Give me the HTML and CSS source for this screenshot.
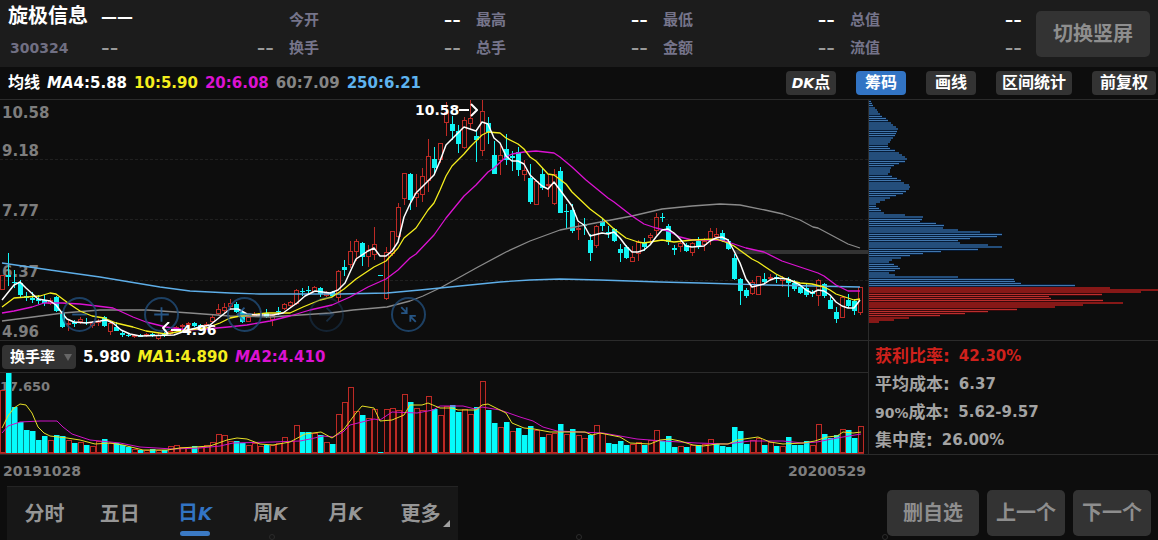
FILE: index.html
```html
<!DOCTYPE html>
<html lang="zh-CN">
<head>
<meta charset="utf-8">
<meta name="viewport" content="width=device-width, initial-scale=1">
<title>旋极信息 300324</title>
<link rel="stylesheet" href="styles.css">
</head>
<body>
<header class="quote">
  <div class="identity">
    <div class="identity-row"><h1 class="stock-name">旋极信息</h1><span class="last-price">——</span></div>
    <div class="identity-row"><span class="stock-code">300324</span><span class="dash change">--</span><span class="dash change-rate">--</span></div>
  </div>
  <dl class="quote-cell"><dt>今开</dt><dd class="dash lit">--</dd><dt>换手</dt><dd class="dash">--</dd></dl>
  <dl class="quote-cell"><dt>最高</dt><dd class="dash lit">--</dd><dt>总手</dt><dd class="dash">--</dd></dl>
  <dl class="quote-cell"><dt>最低</dt><dd class="dash lit">--</dd><dt>金额</dt><dd class="dash">--</dd></dl>
  <dl class="quote-cell"><dt>总值</dt><dd class="dash lit">--</dd><dt>流值</dt><dd class="dash">--</dd></dl>
  <button class="btn rotate" type="button">切换竖屏</button>
</header>

<section class="toolbar">
  <div class="legend">
    <span class="legend-title">均线</span>
    <span><i>MA</i>4:5.88</span>
    <span class="yellow">10:5.90</span>
    <span class="magenta">20:6.08</span>
    <span class="gray">60:7.09</span>
    <span class="blue">250:6.21</span>
  </div>
  <div class="tools">
    <button class="chip-btn snug" type="button"><i>DK</i>点</button>
    <button class="chip-btn active" type="button">筹码</button>
    <button class="chip-btn" type="button">画线</button>
    <button class="chip-btn wide" type="button">区间统计</button>
    <button class="chip-btn" type="button">前复权</button>
  </div>
</section>

<main class="board">
  <div class="charts">
    <div class="price-chart">
      <span class="axis p1">10.58</span>
      <span class="axis p2">9.18</span>
      <span class="axis p3">7.77</span>
      <span class="axis p4">6.37</span>
      <span class="axis p5">4.96</span>
      <svg id="price" class="plot" viewBox="0 100 868 240" preserveAspectRatio="none" role="img" aria-label="日K线"></svg>
      <div class="controls">
        <button type="button" aria-label="缩小"><svg viewBox="0 0 34 34"><path d="M9 17H25"/></svg></button>
        <button type="button" aria-label="放大"><svg viewBox="0 0 34 34"><path d="M9 17H25M17 9V25"/></svg></button>
        <button type="button" aria-label="左移"><svg viewBox="0 0 34 34"><path d="M25 17H10M17 9.500L9.500 17L17 24.500"/></svg></button>
        <button type="button" aria-label="右移" class="dim"><svg viewBox="0 0 34 34"><path d="M9 17H24M17 9.500L24.500 17L17 24.500"/></svg></button>
        <button type="button" aria-label="收起"><svg viewBox="0 0 34 34"><path d="M9 9L15 15M15 9V15.500H9M25 25L19 19M19 25V18.500H25"/></svg></button>
      </div>
      <div class="mark high"><span>10.58</span><svg width="19" height="16" viewBox="0 0 19 16"><path d="M0 8H10M12 2L18 8L12 14"/></svg></div>
      <div class="mark low"><svg width="20" height="16" viewBox="0 0 20 16"><path d="M7 0L1 6L6 12M9 8H19"/></svg><span>4.96</span></div>
    </div>

    <div class="indicator">
      <label class="picker"><select aria-label="指标"><option>换手率</option></select></label>
      <span>5.980</span>
      <span class="yellow"><i>MA</i>1:4.890</span>
      <span class="magenta"><i>MA</i>2:4.410</span>
    </div>

    <div class="volume-chart">
      <span class="axis v1">17.650</span>
      <svg id="volume" class="plot" viewBox="0 373 868 81" preserveAspectRatio="none" role="img" aria-label="换手率"></svg>
    </div>
  </div>

  <aside class="holding">
    <div class="distribution">
      <svg id="chips" class="plot" viewBox="869 100 289 240" preserveAspectRatio="none" role="img" aria-label="筹码分布"></svg>
    </div>
    <dl class="stats">
      <div class="red"><dt>获利比率:</dt><dd>42.30%</dd></div>
      <div><dt>平均成本:</dt><dd>6.37</dd></div>
      <div><dt><b>90%</b>成本:</dt><dd>5.62-9.57</dd></div>
      <div><dt>集中度:</dt><dd>26.00%</dd></div>
    </dl>
  </aside>
</main>

<div class="dates"><div class="date-range"><time>20191028</time><time>20200529</time></div></div>

<footer class="bottom">
  <nav class="tabs">
    <button type="button">分时</button>
    <button type="button">五日</button>
    <button type="button" class="current">日<i>K</i></button>
    <button type="button">周<i>K</i></button>
    <button type="button">月<i>K</i></button>
    <button type="button" class="more">更多</button>
  </nav>
  <div class="actions">
    <button class="btn large" type="button">删自选</button>
    <button class="btn" type="button">上一个</button>
    <button class="btn" type="button">下一个</button>
  </div>
  <div class="rivets"><span></span><span></span><span></span></div>
</footer>
<script src="charts.js"></script>
</body>
</html>
```
FILE: styles.css
```css
* { box-sizing: border-box; }

body {
  margin: 0;
  min-height: 100vh;
  background: #0d0d0d;
  color: #fff;
  font-family: "DejaVu Sans", "Noto Sans CJK SC", sans-serif;
  font-size: 15px;
  font-weight: 700;
  line-height: 20px;
  overflow-x: hidden;
}

h1, dl, dd, dt { margin: 0; }

button, select {
  font: inherit;
  color: inherit;
  border: 0;
  padding: 0;
  background: none;
  cursor: pointer;
  white-space: nowrap;
}

.yellow { color: #f5ee1d; }
.magenta { color: #dc12d2; }
.gray { color: #858585; }
.blue { color: #5eb3ef; }

/* quote header */
.quote {
  display: grid;
  grid-template-columns: 274fr repeat(4, 187fr) 136px;
  align-items: center;
  height: 67px;
  background: #1c1c1c;
}

.identity { padding-left: 8px; }

.identity-row {
  display: flex;
  align-items: center;
  height: 28px;
}

.stock-name {
  width: 93px;
  padding-bottom: 8px;
  font-size: 20px;
  line-height: 20px;
}

.last-price {
  padding-bottom: 6px;
  font-size: 16px;
}

.stock-code {
  width: 93px;
  padding-left: 2px;
  color: #706f83;
  font-size: 14px;
}

.dash {
  color: #999;
  font-size: 24px;
  font-weight: 400;
  line-height: 20px;
}

.dash.lit { color: #fff; }
.change-rate { margin-left: auto; }

.quote-cell {
  display: grid;
  grid-template-columns: auto auto;
  grid-auto-rows: 28px;
  justify-content: space-between;
  align-items: center;
  padding-left: 15px;
  color: #75748a;
}

.btn {
  width: 78px;
  height: 46px;
  border-radius: 5px;
  background: #333;
  color: #8e8e8e;
  font-size: 20px;
}

.btn.large { width: 92px; }
.btn.rotate { width: 114px; margin-left: 14px; }

/* moving-average legend and tools */
.toolbar {
  display: flex;
  justify-content: space-between;
  align-items: center;
  height: 32px;
  padding: 0 2px 0 8px;
}

.legend, .indicator {
  display: flex;
  align-items: center;
  gap: 7px;
  white-space: nowrap;
}

.legend-title { font-size: 16px; }

.tools { display: flex; gap: 20px; }

.chip-btn {
  min-width: 50px;
  height: 24px;
  padding: 0 8px;
  border-radius: 4px;
  background: #333;
  font-size: 16px;
  line-height: 24px;
}

.chip-btn i { font-size: 14px; }
.chip-btn.wide { padding: 0 6px; }
.chip-btn.snug { padding: 0 5px; }
.chip-btn.active { background: #3274c4; }

/* charts */
.board {
  display: grid;
  grid-template-columns: minmax(0, 1fr) 290px;
}

.price-chart, .volume-chart, .distribution {
  position: relative;
  border-top: 1px solid #2b2b2b;
}

.plot { position: relative; display: block; width: 100%; }
#price, #chips { height: 240px; }
#volume { height: 81px; }

.plot path, .plot line { vector-effect: non-scaling-stroke; }

.axis {
  position: absolute;
  left: 2px;
  color: #7d7d7d;
  font-size: 15px;
}

.p1 { top: 3px; }
.p2 { top: 41px; }
.p3 { top: 101px; }
.p4 { top: 162px; }
.p5 { top: 222px; }
.v1 { top: 4px; left: 0; font-size: 13px; }

.controls {
  position: absolute;
  left: 62px;
  top: 197px;
  display: flex;
  justify-content: space-between;
  width: 364px;
}

.controls button {
  width: 35px;
  height: 35px;
  border: 2px solid #214d79;
  border-radius: 50%;
  opacity: 0.8;
}

.controls .dim { opacity: 0.35; }

.controls svg {
  display: block;
  fill: none;
  stroke: #2d67a2;
  stroke-width: 2;
}

.mark {
  position: absolute;
  display: flex;
  align-items: center;
  font-size: 14px;
}

.mark svg { fill: none; stroke: #fff; stroke-width: 2; }
.mark.high { left: 415px; top: 0; }
.mark.low { left: 162px; top: 220px; }

.indicator {
  height: 32px;
  padding-left: 2px;
  border-top: 1px solid #2b2b2b;
}

.picker { position: relative; }

.picker select {
  appearance: none;
  display: block;
  width: 74px;
  height: 24px;
  padding-left: 8px;
  border-radius: 4px;
  background: #333;
  font-size: 15px;
}

.picker::after {
  content: "";
  position: absolute;
  right: 4px;
  top: 9px;
  border: 4px solid transparent;
  border-top: 7px solid #666;
  border-bottom: 0;
  pointer-events: none;
}

/* cost distribution */
.holding { border-left: 1px solid #2b2b2b; }

.stats {
  padding: 1px 6px 0;
  border-top: 1px solid #2b2b2b;
  color: #a3a3a3;
}

.stats div {
  display: flex;
  align-items: center;
  gap: 9px;
  height: 28px;
}

.stats dt { font-size: 17px; }
.stats b { font-size: 14px; }
.stats .red { color: #cf211c; }

.dates {
  height: 32px;
  padding-right: 292px;
  border-top: 1px solid #2b2b2b;
}

.date-range {
  display: flex;
  justify-content: space-between;
  padding: 6px 0 0 3px;
  color: #7d7d7d;
  font-size: 14px;
}

/* period tabs and actions */
.bottom {
  position: relative;
  display: flex;
  justify-content: space-between;
  height: 54px;
  padding: 0 7px;
}

.tabs {
  display: flex;
  width: 451px;
  border-top: 1px solid #242424;
  background: #171717;
  color: #969696;
  font-size: 20px;
}

.tabs button { position: relative; flex: 1; }
.tabs i { font-size: 18px; }
.tabs .current { color: #3274c4; }

.tabs .current::after {
  content: "";
  position: absolute;
  left: 50%;
  bottom: 4px;
  width: 30px;
  height: 5px;
  margin-left: -15px;
  border-radius: 3px;
  background: #3b7ac5;
}

.tabs .more::after {
  content: "";
  position: absolute;
  right: 8px;
  bottom: 13px;
  border-left: 7px solid transparent;
  border-bottom: 7px solid #a0a0a0;
}

.actions {
  display: flex;
  gap: 8px;
  padding-top: 4px;
}

.rivets {
  position: absolute;
  left: 269px;
  right: 270px;
  bottom: 0;
  display: flex;
  justify-content: space-between;
  pointer-events: none;
}

.rivets span {
  width: 6px;
  height: 6px;
  border: 1px solid #2b2b2b;
  border-radius: 50%;
}
```
FILE: charts.js
```js
const UP = '#bd2a25';
const DOWN = '#11f4f4';

// One entry per day: direction, high, body top, body bottom, low.
const candles = `r275,275,290,290 c253,275,277,286 c270,282,283,288 c280,283,295,297 c292,296,298,301 c292,298,300,303
c295,299,301,304 c295,300,303,306 r298,300,304,305 c296,297,311,312 c311,313,327,328 r319,323,325,331 c320,322,324,327
r317,319,322,324 c318,322,323,325 r321,323,326,328 r319,321,323,326 c316,317,326,327 r322,323,332,335 c322,327,331,331
c331,333,335,337 c333,335,336,337 r334,335,337,338 c334,335,337,337 r333,334,336,337 c333,334,336,337 r333,335,339,340
c332,333,335,337 r330,331,334,335 r326,327,331,332 r324,325,327,329 r322,323,325,327 c322,323,326,327 c324,325,327,328
r322,324,326,327 r315,317,322,324 r304,309,314,315 r303,307,311,313 r299,303,307,310 c302,304,312,313 c310,312,322,323
r315,317,322,322 r312,314,316,317 r311,313,315,316 c309,313,317,318 r314,315,320,326 c307,311,312,315 r303,304,309,310
r301,302,306,307 r289,290,304,305 c288,291,292,296 c286,290,291,295 r286,287,292,292 c287,288,294,297 r291,293,296,297
c291,292,296,297 r270,271,298,302 c260,267,270,276 r241,251,265,268 r239,241,252,261 c242,243,257,266 r245,250,257,267
r227,244,255,260 c275,275,276,276 r247,252,299,300 r231,231,254,256 r203,207,237,238 r173,173,199,205 c173,174,200,210
r174,193,198,207 r168,176,195,202 r139,156,181,192 c147,159,168,175 r143,143,160,163 r102,112,123,136 c116,124,131,140
c125,131,144,153 r117,120,148,149 r100,118,124,129 c129,136,140,162 r99,111,151,156 c117,123,132,144 c141,155,174,174
r146,155,161,175 c134,149,160,165 c151,156,158,171 c147,152,170,176 r160,170,175,181 c164,178,202,204 r180,181,205,205
c168,174,188,190 r174,184,186,197 r169,174,204,205 c167,171,213,213 c204,211,212,228 c204,210,231,233 r223,228,229,240
c218,224,226,235 c234,240,253,261 r225,226,246,248 c218,221,226,231 c226,232,234,238 c228,229,241,242 c244,249,253,262
c245,247,258,259 r246,257,262,262 r240,242,254,261 c238,242,247,251 r233,235,238,243 r213,217,231,235 c213,217,218,222
c224,226,242,245 c245,248,250,255 r242,243,247,252 c243,245,251,252 r242,243,253,256 c237,241,247,249 r238,241,245,251
r228,231,240,245 r228,234,237,240 c230,233,241,242 c239,241,249,250 c254,258,279,280 c278,279,291,305 c288,290,296,298
r280,282,294,295 r276,276,295,295 c273,279,282,284 r274,277,279,281 c275,277,279,283 r276,278,281,287 c277,279,283,297
c280,283,289,291 c285,287,293,294 c283,288,295,297 c290,292,294,297 r279,280,296,306 c283,284,296,298 c297,300,309,309
c307,312,319,323 r296,297,318,318 c294,300,306,308 c299,301,311,315 r287,287,313,315`.split(/\s+/);

const averages = [
  ['#8a8a8a', '2,321 33,317 63,313 100,310 147,310 190,313 230,316 270,317 330,313 353,310 387,307 410,301 423,296 440,288 460,277 478,267 506,252 530,241 560,230 590,224 632,216 662,209 692,206 720,204 740,205 765,210 783,214 800,220 813,227 818,228 833,236 848,244 860,248'],
  ['#5eaee8', '2,263 50,270 100,277 130,282 160,287 190,291 230,293 260,294 340,294 387,293 420,290 440,288 460,286 500,282 530,280 560,279 600,280 660,282 700,283 767,285 860,287'],
  ['#dc12d2', '2,313 14,311 32,307 44,303 62,303 80,304 97,306 113,308 122,312 133,317 146,322 166,327 187,330 206,329 228,327 247,325 270,321 290,316 310,310 332,305 350,297 368,287 386,279 398,270 410,258 416,254 434,235 446,218 464,196 476,185 488,172 494,168 506,157 512,154 524,152 536,151 554,153 560,157 572,167 586,180 608,198 614,202 632,216 644,224 656,228 668,231 680,237 692,240 720,240 728,242 746,248 764,252 782,261 800,267 818,273 824,276 836,285 848,291 860,291'],
  ['#f5ee1d', '2,307 14,298 26,297 40,296 50,293 56,294 68,303 80,311 92,316 104,318 116,323 133,327 146,331 166,334 187,330 206,328 220,323 230,318 240,316 267,313 290,313 303,307 320,300 332,297 344,289 356,279 374,267 386,261 398,248 404,238 416,228 428,210 434,203 440,190 446,176 452,166 464,154 470,147 482,135 488,132 500,133 506,138 518,144 524,149 530,157 536,161 548,174 554,175 566,184 572,192 590,209 602,218 614,229 626,238 638,242 644,243 662,240 674,242 692,240 716,239 728,243 734,246 752,259 758,262 776,274 788,280 800,283 812,284 824,287 830,290 836,294 854,300 860,299'],
  ['#ffffff', '2,300 14,285 20,282 26,288 38,299 50,301 56,305 62,313 67,319 74,322 86,323 100,321 106,320 113,323 121,330 130,334 140,336 174,335 188,330 200,327 210,325 220,317 230,309 238,309 247,314 257,315 273,315 283,313 290,308 297,303 305,296 315,291 330,293 338,290 345,283 356,259 368,251 374,248 380,256 386,256 392,251 398,242 404,217 410,204 416,193 428,181 434,175 440,161 446,145 452,139 464,127 476,131 482,122 488,124 494,138 500,143 506,156 512,161 518,161 524,164 530,175 542,186 548,189 554,182 560,190 566,198 572,206 578,221 584,225 590,236 602,233 608,234 614,232 620,238 626,246 632,252 638,252 644,250 650,245 656,237 662,230 668,229 674,233 680,239 686,246 692,247 704,246 710,241 716,238 722,237 728,240 734,251 740,263 746,279 752,287 764,284 770,280 776,278 788,279 800,285 806,290 812,293 818,290 824,291 830,295 836,302 842,306 848,308 854,308 860,300']
];

// Bar heights; a negative value is a falling day.
const turnover = [63,-81,-46,-31,-23,-22,-13,-17,13,-18,-17,13,-10,11,-8,7,12,-14,10,-10,-8,-6,4,-3,3,-4,3,-3,7,8,6,6,-7,6,8,11,19,18,12,-12,
  -10,8,10,7,-8,8,10,16,12,28,-21,-21,20,-18,11,-9,39,51,66,42,-38,35,44,-1,44,45,43,59,-51,45,43,57,-44,38,47,-48,-41,44,39,-46,
  72,-43,-30,26,-31,22,-25,-18,-27,23,-16,19,20,-29,19,-24,18,15,-18,28,20,-10,-9,-12,-8,9,11,-8,13,23,-12,-17,-6,7,-6,8,-8,9,14,-9,
  -7,-6,-26,-22,-9,13,15,-8,11,-7,7,-16,-8,-8,-12,8,29,-19,-15,-18,24,-23,-15,27];

const turnoverAverages = [
  ['#cf12c6', '2,433 8,426 20,422 40,421 57,421 63,427 72,434 90,440 120,443 140,447 173,449 200,448 220,446 233,443 273,442 300,441 310,439 323,436 333,437 343,432 350,425 374,419 380,420 392,412 417,413 433,410 440,406 463,406 475,409 482,407 500,410 520,417 533,421 543,427 557,431 580,432 603,433 637,439 663,441 697,443 727,444 750,441 783,441 803,443 817,442 837,438 861,434'],
  ['#e6df26', '2,428 8,416 14,408 20,404 26,405 32,413 38,427 44,433 50,436 67,438 80,440 95,444 110,443 123,445 143,450 167,450 180,448 210,446 227,440 237,438 247,439 260,444 273,445 290,442 305,434 321,432 332,438 344,429 356,413 362,406 374,408 380,421 392,420 404,415 410,405 422,405 428,403 440,408 452,408 458,410 476,410 482,405 488,404 506,413 512,423 524,428 534,429 550,432 585,432 592,435 600,433 620,437 630,443 650,444 660,440 670,439 680,441 693,445 703,446 717,444 728,444 737,440 758,437 770,442 783,444 803,443 815,441 827,437 837,436 843,432 853,433 861,432']
];

// Cost distribution: group start, number of fine rows, then row lengths.
const costGroups = [
  [101,3,2,3,4,6,8,9,11],[116,3,13,17,19,22,24,27,29],[131,3,28,27,26,24,22,21,19],[146,3,19,21,26,30,33,36,38],
  [161,3,36,30,25,22,21,21,19],[176,3,23,28,32,35,40,41,40],[191,3,37,34,27,21,16,11,7],[206,3,7,10,12,15,36,54],
  [219,4,53,51,67,75,74,89,111],[234,4,133,128,101,89,91,119,133],[249,4,109,72,54,41,32,23,20],[264,4,25,29,31,26,20,26,89],
  [279,4,145,146,152,206,241,289,272],[294,4,233,180,182,234,254,214,186],[309,4,148,119,96,71,40,25,10]
];

const rect = (x, y, w, h, fill) => `<rect x="${x}" y="${y}" width="${w}" height="${h}" fill="${fill}"/>`;
const outline = (x, y, w, h, fill = 'none') =>
  `<path d="M${x + 0.5} ${y + 0.5}h${w - 1}v${Math.max(h - 1, 1)}h${1 - w}z" fill="${fill}" stroke="${UP}"/>`;
const curve = ([color, points], width) =>
  `<path d="M${points.replace(/ /g, 'L')}" fill="none" stroke="${color}" stroke-width="${width}" stroke-linejoin="round"/>`;

let price = [159, 219, 280].map(y =>
  `<line x1="0" x2="868" y1="${y + 0.5}" y2="${y + 0.5}" stroke="#202020" stroke-dasharray="3 2"/>`).join('');
price += rect(735, 250, 133, 4, '#333');
price += '<g shape-rendering="crispEdges">';
candles.forEach((day, i) => {
  const [high, top, bottom, low] = day.slice(1).split(',').map(Number);
  const x = i * 6;
  if (day[0] === 'c') {
    price += rect(x + 2, high, 1, low - high, DOWN) + rect(x, top, 5, bottom - top, DOWN);
  } else {
    price += rect(x + 2, high, 1, top - high, UP) + rect(x + 2, bottom, 1, low - bottom, UP) + outline(x, top, 5, bottom - top);
  }
});
price += '</g>' + averages.map(line => curve(line, line[0] === '#ffffff' ? 1.5 : 1.3)).join('');
document.getElementById('price').innerHTML = price;

let volume = '<g shape-rendering="crispEdges">';
turnover.forEach((value, i) => {
  const h = Math.abs(value);
  const x = i * 6;
  volume += value < 0
    ? rect(x, 453 - h, 6, h, '#0a8585') + rect(x, 453 - h, 5, h, '#05fbfb')
    : outline(x, 453 - h, 6, h, '#190909');
});
volume += rect(0, 453, 864, 1, '#a32320') + '</g>' + turnoverAverages.map(line => curve(line, 1)).join('');
document.getElementById('volume').innerHTML = volume;

let cost = '<g shape-rendering="crispEdges">';
costGroups.forEach(([start, fine, ...lengths]) => {
  lengths.forEach((length, i) => {
    const red = start > 290 || (start === 279 && i > 3);
    const y = start + i * 2;
    if (i < fine) {
      cost += rect(869, y - 1, length, 3, red ? '#39090b' : '#061c38') + rect(869, y, length, 1, red ? '#bb2e2d' : '#4076ad');
    } else {
      cost += rect(869, y, length, 2, red ? '#861817' : '#244e7b');
    }
  });
});
document.getElementById('chips').innerHTML = cost + '</g>';
```
